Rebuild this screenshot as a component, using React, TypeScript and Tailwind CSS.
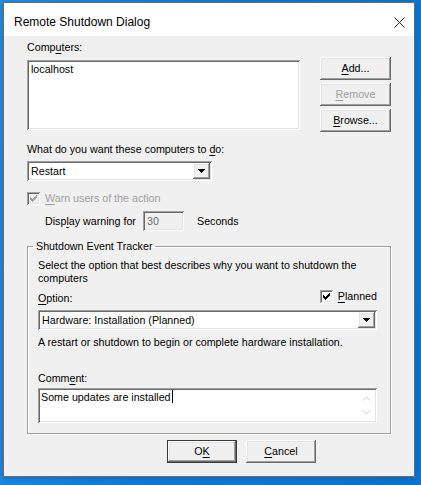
import React from "react";

const raised =
  "bg-[#f0f0f0] shadow-[inset_-1px_-1px_#696969,inset_1px_1px_#ffffff,inset_-2px_-2px_#a0a0a0,inset_2px_2px_#e3e3e3]";
const sunken =
  "shadow-[inset_1px_1px_#a0a0a0,inset_-1px_-1px_#ffffff,inset_2px_2px_#696969,inset_-2px_-2px_#e3e3e3]";

function U({ children }: { children: React.ReactNode }) {
  return <span className="underline underline-offset-[2px]">{children}</span>;
}

// classic 7x7 check glyph, one column at a time
const CHECK_COLS = [2, 3, 4, 3, 2, 1, 0];

function CheckBox({ disabled }: { disabled?: boolean }) {
  return (
    <div className={`relative size-[13px] shrink-0 ${sunken} ${disabled ? "bg-[#f0f0f0]" : "bg-white"}`}>
      <svg width="13" height="13" className="absolute left-0 top-0" shapeRendering="crispEdges">
        {CHECK_COLS.map((row, i) => (
          <rect key={i} x={3 + i} y={3 + row} width="1" height="3" fill={disabled ? "#a0a0a0" : "#000"} />
        ))}
      </svg>
    </div>
  );
}

function DropArrow() {
  return (
    <div className={`absolute right-[2px] top-[2px] h-[16px] w-[17px] ${raised}`}>
      <svg width="17" height="16" shapeRendering="crispEdges">
        <rect x="5" y="6" width="7" height="1" fill="#000" />
        <rect x="6" y="7" width="5" height="1" fill="#000" />
        <rect x="7" y="8" width="3" height="1" fill="#000" />
        <rect x="8" y="9" width="1" height="1" fill="#000" />
      </svg>
    </div>
  );
}

function Combo({ value, className }: { value: string; className: string }) {
  return (
    <div className={`relative flex h-[20px] items-center bg-white pl-[4px] ${sunken} ${className}`}>
      <span>{value}</span>
      <DropArrow />
    </div>
  );
}

function Button({
  children,
  w,
  disabled,
  isDefault,
}: {
  children: React.ReactNode;
  w: string;
  disabled?: boolean;
  isDefault?: boolean;
}) {
  return (
    <div
      className={`flex h-[23px] items-center justify-center ${w} ${raised} ${
        isDefault ? "border border-[#3a3a3a]" : ""
      } ${disabled ? "text-[#a0a0a0]" : ""}`}
    >
      {children}
    </div>
  );
}

export default function App() {
  return (
    <div className="min-h-screen bg-[linear-gradient(100deg,#1c8fea_0%,#0d7bd9_45%,#0a74d1_100%)] pl-[3px] pt-[2px] font-['Liberation_Sans',Arial,sans-serif] text-[10.7px] leading-[13px] text-black">
      <div className="flex h-[475px] w-[412px] flex-col border border-[#6b6b6b] shadow-[0_1px_6px_rgba(0,0,0,0.2)]">
        {/* title bar */}
        <div className="flex h-[33px] shrink-0 justify-between bg-white pl-[10px] pr-[9px]">
          <span className="pt-[11px] text-[12px] leading-[16px]">Remote Shutdown Dialog</span>
          <svg width="11" height="11" viewBox="0 0 11 11" className="mt-[14px]">
            <path d="M0.5 0.5L10.5 10.5M10.5 0.5L0.5 10.5" stroke="#222" strokeWidth="1" />
          </svg>
        </div>

        {/* client area */}
        <div className="flex flex-1 flex-col bg-[#f0f0f0] pl-[23px] pt-[5px]">
          <div className="flex">
            <div className="flex w-[273px] flex-col">
              <span>
                Comp<U>u</U>ters:
              </span>
              <div className={`mt-[6px] h-[70px] bg-white pl-[4px] pt-[3px] ${sunken}`}>localhost</div>
            </div>
            <div className="ml-[20px] mt-[16px] flex flex-col gap-[3px]">
              <Button w="w-[71px]">
                <span>
                  <U>A</U>dd...
                </span>
              </Button>
              <Button w="w-[71px]" disabled>
                <span>
                  <U>R</U>emove
                </span>
              </Button>
              <Button w="w-[71px]">
                <span>
                  <U>B</U>rowse...
                </span>
              </Button>
            </div>
          </div>

          <span className="mt-[11px]">
            What do you want these computers to <U>d</U>o:
          </span>
          <Combo value="Restart" className="mt-[5px] w-[185px]" />

          <div className="mt-[11px] flex h-[13px] items-center gap-[5px] text-[#a0a0a0]">
            <CheckBox disabled />
            <span>
              <U>W</U>arn users of the action
            </span>
          </div>

          <div className="mt-[6px] flex h-[20px] items-center pl-[18px]">
            <span className="w-[98px]">
              Disp<U>l</U>ay warning for
            </span>
            <div className={`flex h-[20px] w-[41px] items-center bg-[#f0f0f0] pl-[4px] text-[#6d6d6d] ${sunken}`}>30</div>
            <span className="ml-[13px]">Seconds</span>
          </div>

          {/* event tracker group */}
          <fieldset className="mt-[9px] w-[364px] border border-[#a0a0a0] shadow-[inset_1px_1px_#ffffff,1px_1px_#ffffff]">
            <legend className="ml-[5px] px-[3px] leading-[13px]">Shutdown Event Tracker</legend>
            <div className="flex flex-col pb-[10px] pl-[10px] pr-[13px] pt-[6px]">
              <p>
                Select the option that best describes why you want to shutdown the
                <br />
                computers
              </p>
              <div className="mt-[5px] flex items-start justify-between">
                <span className="mt-[2px]">
                  <U>O</U>ption:
                </span>
                <div className="flex h-[13px] items-center gap-[5px]">
                  <CheckBox />
                  <span>
                    <U>P</U>lanned
                  </span>
                </div>
              </div>
              <Combo value="Hardware: Installation (Planned)" className="mt-[5px] w-full" />
              <span className="mt-[6px]">A restart or shutdown to begin or complete hardware installation.</span>
              <span className="mt-[23px]">
                Comm<U>e</U>nt:
              </span>
              <div className={`relative mt-[3px] flex h-[35px] bg-white pl-[3px] pt-[3px] ${sunken}`}>
                <span>Some updates are installed</span>
                <span className="ml-[1px] mt-[-1px] h-[13px] w-[1px] bg-black" />
                <div className="absolute right-[2px] top-[2px] flex h-[31px] w-[17px] flex-col items-center justify-between py-[6px]">
                  <svg width="9" height="5" viewBox="0 0 9 5">
                    <path d="M1 4.5L4.5 1L8 4.5" fill="none" stroke="#c4c4c4" strokeWidth="1" />
                  </svg>
                  <svg width="9" height="5" viewBox="0 0 9 5">
                    <path d="M1 0.5L4.5 4L8 0.5" fill="none" stroke="#c4c4c4" strokeWidth="1" />
                  </svg>
                </div>
              </div>
            </div>
          </fieldset>

          <div className="ml-[140px] mt-[6px] flex gap-[9px]">
            <Button w="w-[70px]" isDefault>
              <span>
                O<U>K</U>
              </span>
            </Button>
            <Button w="w-[70px]">
              <span>
                <U>C</U>ancel
              </span>
            </Button>
          </div>
        </div>
      </div>
    </div>
  );
}
